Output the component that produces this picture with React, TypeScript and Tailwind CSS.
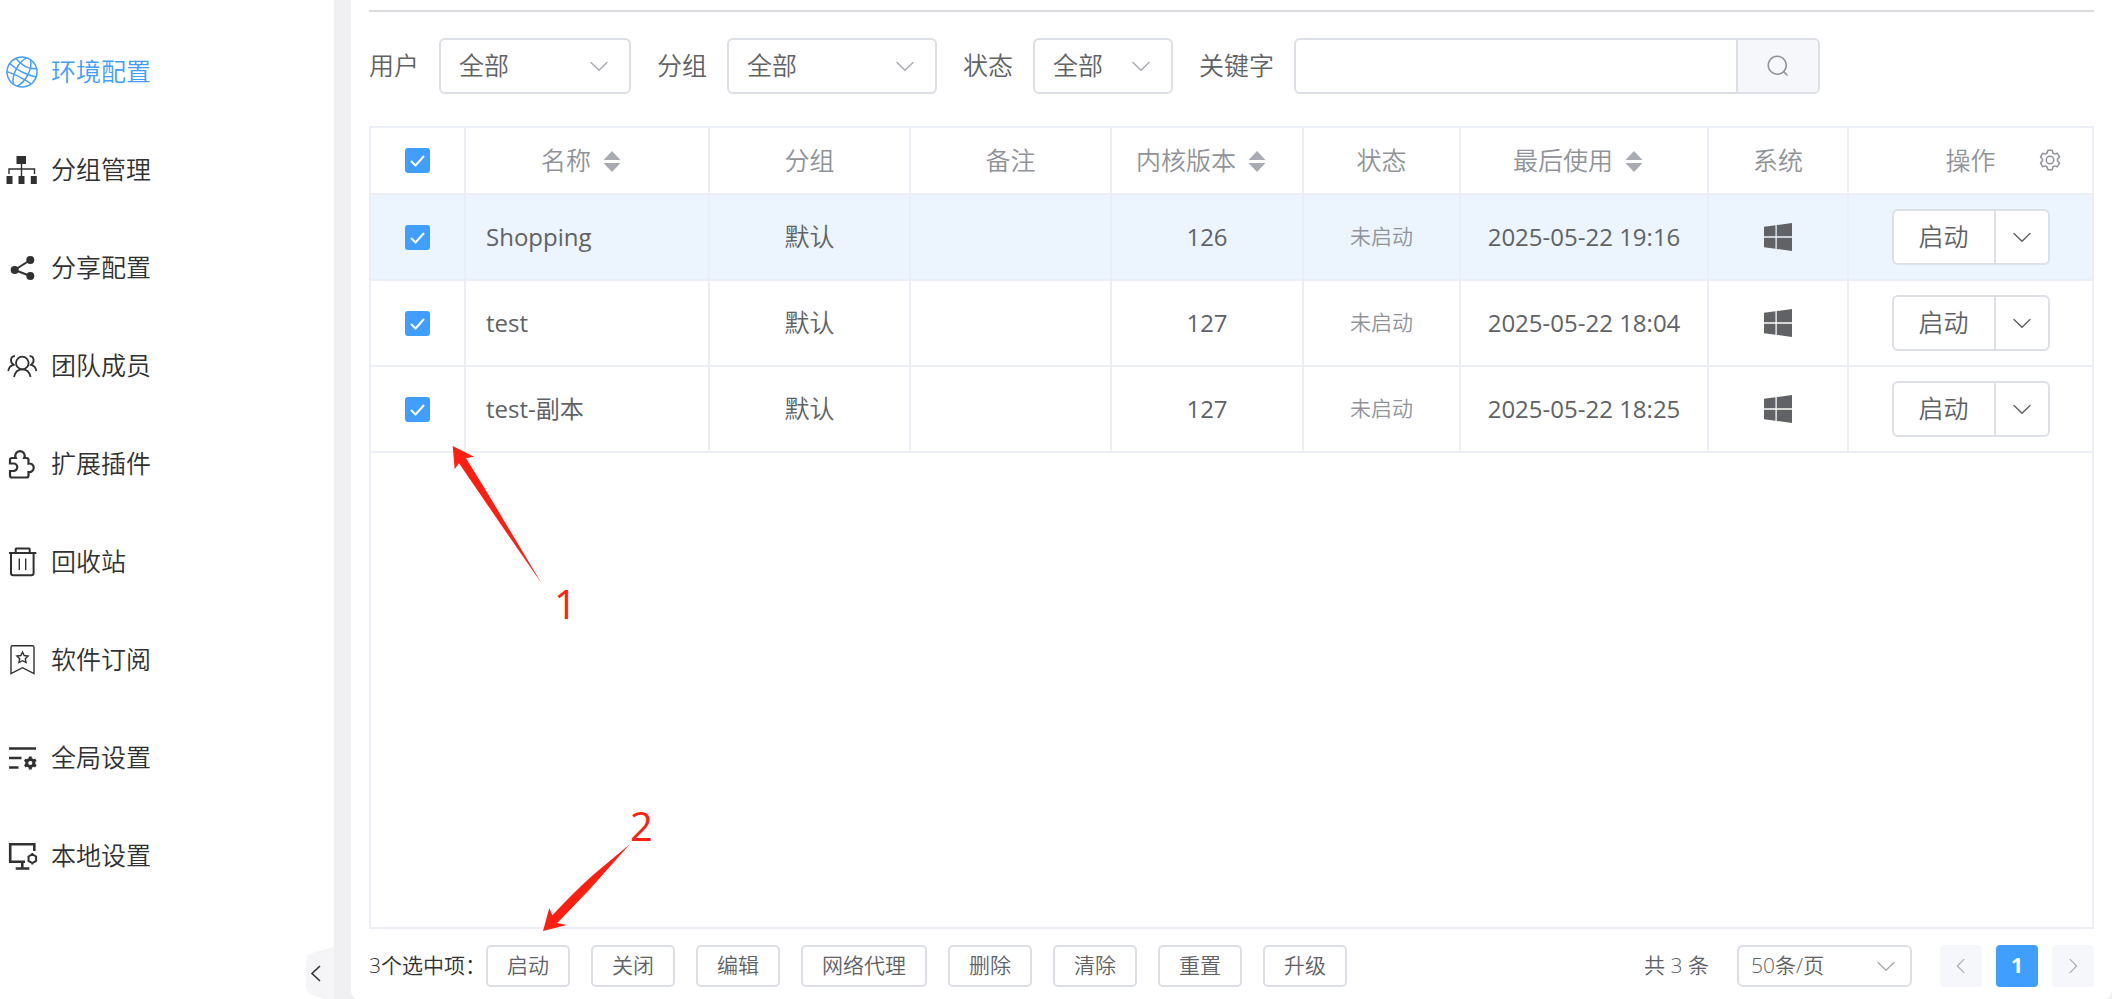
import { useState, type ReactNode } from "react";
import { FaWindows } from "react-icons/fa";
import clsx from "clsx";

const GEAR_PATH =
    "M600.7 64a32 32 0 0 1 30.46 22.2l35.2 109.4c14.8 7.2 28.9 15.36 42.4 24.5l112.4-24.2a32 32 0 0 1 34.4 15.36L944.3 364.8a32 32 0 0 1-4 37.5l-77.1 85.1a357 357 0 0 1 0 49l77.1 85.3a32 32 0 0 1 4 37.5l-88.7 153.6a32 32 0 0 1-34.4 15.3L708.8 803.9c-13.4 9.1-27.6 17.3-42.4 24.5l-35.2 109.4A32 32 0 0 1 600.7 960H423.3a32 32 0 0 1-30.5-22.2L357.7 828.5a352 352 0 0 1-42.6-24.7l-112.3 24.3a32 32 0 0 1-34.4-15.4L79.7 659.2a32 32 0 0 1 4-37.5l77.1-85.2a357 357 0 0 1 0-48.9l-77.1-85.3A32 32 0 0 1 79.7 364.8l88.7-153.6a32 32 0 0 1 34.4-15.3l112.3 24.3c13.6-9.2 27.8-17.4 42.6-24.6l35.2-109.3A32 32 0 0 1 423.2 64zm-23.4 64H446.7l-36.3 113.1-24.5 12a294 294 0 0 0-34.8 20.1l-22.7 15.3-116.2-25.1-65.3 113.2 79.7 88.2-1.9 27.1a293 293 0 0 0 0 40.2l1.9 27.1-79.8 88.2 65.3 113.2 116.2-25 22.7 15.3a294 294 0 0 0 34.8 20.1l24.5 12L446.7 896h130.7l36.5-113.2 24.4-11.9a288 288 0 0 0 34.8-20.1l22.6-15.3 116.3 25 65.3-113.2-79.7-88.2 1.9-27.1a293 293 0 0 0 0-40.3l-1.9-27.1 79.8-88.1-65.3-113.2-116.3 25-22.6-15.2a288 288 0 0 0-34.8-20.1l-24.4-11.9L577.3 128zM512 320a192 192 0 1 1 0 384 192 192 0 0 1 0-384m0 64a128 128 0 1 0 0 256 128 128 0 0 0 0-256";

interface NavItem {
    label: string;
    icon: ReactNode;
}

const navItems: NavItem[] = [
    {
        label: "环境配置",
        icon: (
            <g strokeWidth={1.5} transform="rotate(27 16 16)">
                <circle cx={16} cy={16} r={15} />
                <path d="M14 1.200C8 8 8 24 14 30.800M18 1.200c6 6.800 6 22.800 0 29.600M4.500 6.500q11.500 6 23 0M1.200 14q14.800 4 29.600 0M2.500 22.500q13.500-2 27 0" />
            </g>
        ),
    },
    {
        label: "分组管理",
        icon: (
            <>
                <path d="M3 20v-5h25.500v5M15.500 10v12" strokeWidth={1.4} />
                <path d="M10.500 2h9.500v8h-9.500zM.5 22h6v8h-6zM12.500 22h6v8h-6zM24.800 22h6v8h-6z" fill="currentColor" stroke="none" />
            </>
        ),
    },
    {
        label: "分享配置",
        icon: (
            <>
                <path d="M24.300 8 8.700 18l15.600 6" strokeWidth={2} />
                <g fill="currentColor" stroke="none">
                    <circle cx={24.3} cy={8} r={4} />
                    <circle cx={8.7} cy={18} r={4} />
                    <circle cx={24.3} cy={24} r={4} />
                </g>
            </>
        ),
    },
    {
        label: "团队成员",
        icon: (
            <g strokeWidth={1.8}>
                <circle cx={16.3} cy={13} r={6.3} />
                <path d="M8 27c1-5 4-7.700 8.300-7.700s7.300 2.700 8.300 7.700M9 6.200C4.500 6 3.500 12 7.500 14.800 4.500 15.500 2.800 17.500 2.200 21M23.600 6.200c4.500-.200 5.500 5.800 1.500 8.600 3 .700 4.700 2.700 5.300 6.200" />
            </g>
        ),
    },
    {
        label: "扩展插件",
        icon: (
            <path
                d="M4 15.500V12q0-2 2-2h3.800a4.700 4.700 0 1 1 8.400 0H20.500q2 0 2 2v3.600a4.300 4.300 0 1 1 0 8.400v3.500q0 2-2 2H6q-2 0-2-2v-4.500h3.500a3.700 3.700 0 0 0 0-7.500z"
                strokeWidth={2.2}
            />
        ),
    },
    {
        label: "回收站",
        icon: (
            <>
                <path d="M3 7h27.300M9.700 6.500V3q0-.500.500-.500h13q.500 0 .500.500v3.500M5 7v20q0 2.300 2.300 2.300h18q2.300 0 2.300-2.300V7" strokeWidth={2} />
                <path d="M13.300 12.500V24M19.700 12.500V24" strokeWidth={1.4} />
            </>
        ),
    },
    {
        label: "软件订阅",
        icon: (
            <g strokeWidth={1.4}>
                <path d="M5 29.500V3.500q0-1.700 1.700-1.700H26.300q1.700 0 1.700 1.700v26l-11.500-5.800z" />
                <path d="m16.500 8 1.700 3.500 3.900.500-2.800 2.700.700 3.800-3.500-1.800-3.500 1.800.700-3.800-2.800-2.700 3.900-.500z" />
            </g>
        ),
    },
    {
        label: "全局设置",
        icon: (
            <>
                <path d="M3 6.500h27M3 16h12.500M3 25.500h9.500" strokeWidth={2.4} />
                <circle cx={24.3} cy={21} r={3.6} strokeWidth={3} />
                <path d="M24.300 14.500v2.500M24.300 25v2.500M18.700 17.800l2 1.200M27.900 23l2 1.200M18.700 24.200l2-1.200M27.900 19l2-1.200" strokeWidth={3} />
            </>
        ),
    },
    {
        label: "本地设置",
        icon: (
            <>
                <path d="M28.300 11V4.200H4.200v17.500H19M16.300 22v6M9.700 28.500h13.600" strokeWidth={2.6} />
                <path d="m26.300 14.300 3.800 2.200v4.400l-3.800 2.200-3.800-2.200v-4.400zM26.300 13v1.500M26.300 23v1.500" strokeWidth={2} />
            </>
        ),
    },
];

interface Profile {
    name: string;
    group: string;
    kernel: string;
    lastUsed: string;
}

const profiles: Profile[] = [
    { name: "Shopping", group: "默认", kernel: "126", lastUsed: "2025-05-22 19:16" },
    { name: "test", group: "默认", kernel: "127", lastUsed: "2025-05-22 18:04" },
    { name: "test-副本", group: "默认", kernel: "127", lastUsed: "2025-05-22 18:25" },
];

const batchActions = ["启动", "关闭", "编辑", "网络代理", "删除", "清除", "重置", "升级"];

function Chevron({ className }: { className?: string }) {
    return (
        <svg viewBox="0 0 1024 1024" fill="currentColor" className={className} aria-hidden="true">
            <path d="M831.872 340.864 512 652.672 192.128 340.864a30.592 30.592 0 0 0-42.752 0 29.12 29.12 0 0 0 0 41.6L489.664 714.24a32 32 0 0 0 44.672 0l340.288-331.712a29.12 29.12 0 0 0 0-41.728 30.592 30.592 0 0 0-42.752 0z" />
        </svg>
    );
}

function SortLabel({ children }: { children: ReactNode }) {
    return (
        <div className="flex items-center justify-center gap-3 pr-3">
            {children}
            <svg viewBox="0 0 18 24" className="h-6 w-[18px]" fill="#a8abb2" aria-hidden="true">
                <path d="M9 2l8.500 9H.5zM9 23l8.500-9H.5z" />
            </svg>
        </div>
    );
}

function FilterSelect({ id, label, className }: { id: string; label: string; className: string }) {
    return (
        <div className="flex items-center gap-5">
            <label htmlFor={id}>{label}</label>
            <div className={clsx("relative", className)}>
                <select
                    id={id}
                    className="w-full h-14 appearance-none rounded-md border-2 border-[#dcdfe6] bg-white pl-[18px] text-[#606266]"
                >
                    <option>全部</option>
                </select>
                <Chevron className="absolute right-5 top-4 size-6 text-[#a8abb2] pointer-events-none" />
            </div>
        </div>
    );
}

function Checkbox({ label, checked, onChange }: { label: string; checked: boolean; onChange: () => void }) {
    return (
        <span className="relative mx-auto block size-[25px]">
            <input
                type="checkbox"
                aria-label={label}
                checked={checked}
                onChange={onChange}
                className="block size-full appearance-none rounded-[3px] border-2 border-[#dcdfe6] bg-white checked:border-[#409eff] checked:bg-[#409eff]"
            />
            <svg viewBox="0 0 25 25" className="absolute inset-0 pointer-events-none" fill="none" stroke="#fff" strokeWidth={2}>
                <path d="M6 13l4.500 4.500L19 8" />
            </svg>
        </span>
    );
}

export default function App() {
    const [selected, setSelected] = useState([true, true, true]);
    const allSelected = selected.every(Boolean);

    const toggle = (index: number) => setSelected(selected.map((on, i) => (i === index ? !on : on)));

    return (
        <div className="relative flex min-h-screen bg-[#f0f0f3] text-[25px] font-[350] text-[#606266] font-['Open_Sans','Noto_Sans_CJK_SC',sans-serif]">
            <aside className="relative w-[334px] shrink-0 bg-white pt-[23px]">
                <nav>
                    {navItems.map((item, index) => (
                        <a
                            key={item.label}
                            href="#"
                            className={clsx(
                                "flex h-[98px] items-center gap-[13px] pl-1.5",
                                index === 0 ? "text-[#409eff]" : "text-[#303133]"
                            )}
                        >
                            <svg viewBox="0 0 32 32" className="size-8" fill="none" stroke="currentColor" aria-hidden="true">
                                {item.icon}
                            </svg>
                            {item.label}
                        </a>
                    ))}
                </nav>
                <button type="button" aria-label="收起" className="absolute bottom-0 right-0 h-[52px] w-7">
                    <svg viewBox="0 0 28 52" className="size-full" fill="none">
                        <path d="M28 0 6 6Q0 8 0 14v26q0 6 6 8l12 4h10z" fill="#f5f5f7" />
                        <path d="M14 19 6 26.500 14 34" stroke="#303133" strokeWidth={1.6} />
                    </svg>
                </button>
            </aside>

            <main className="ml-[17px] flex min-w-0 flex-1 flex-col rounded-b-lg bg-white px-[18px] pt-2.5 pb-3">
                <form className="flex items-center gap-[26px] border-t-2 border-[#d9dbde] pt-[26px] pb-8" onSubmit={(e) => e.preventDefault()}>
                    <FilterSelect id="user" label="用户" className="w-[192px]" />
                    <FilterSelect id="group" label="分组" className="w-[210px]" />
                    <FilterSelect id="state" label="状态" className="w-[140px]" />
                    <div className="flex items-center gap-5">
                        <label htmlFor="keyword">关键字</label>
                        <div className="flex h-14 w-[526px] overflow-hidden rounded-md border-2 border-[#dcdfe6]">
                            <input id="keyword" type="text" className="min-w-0 flex-1 px-4 outline-none" />
                            <button
                                type="submit"
                                aria-label="搜索"
                                className="flex w-[82px] items-center justify-center border-l-2 border-[#dcdfe6] bg-[#f5f7fa] text-[#909399]"
                            >
                                <svg viewBox="0 0 1024 1024" className="size-6" fill="currentColor">
                                    <path d="m795.904 750.72 124.992 124.928a32 32 0 0 1-45.248 45.248L750.656 795.904a416 416 0 1 1 45.248-45.248zM480 832a352 352 0 1 0 0-704 352 352 0 0 0 0 704z" />
                                </svg>
                            </button>
                        </div>
                    </div>
                </form>

                <div className="flex-1 border-2 border-[#ebeef5]">
                    <table className="w-full table-fixed border-separate border-spacing-0 text-center [&_td]:border-b-2 [&_td]:border-r-2 [&_td]:border-[#ebeef5] [&_th]:border-b-2 [&_th]:border-r-2 [&_th]:border-[#ebeef5] [&_th]:font-[350] [&_tr>:last-child]:border-r-0">
                        <colgroup>
                            <col className="w-[95px]" />
                            <col className="w-[244px]" />
                            <col className="w-[201px]" />
                            <col className="w-[201px]" />
                            <col className="w-[192px]" />
                            <col className="w-[157px]" />
                            <col className="w-[248px]" />
                            <col className="w-[140px]" />
                            <col className="w-[243px]" />
                        </colgroup>
                        <thead className="text-[#909399]">
                            <tr className="h-[67px]">
                                <th>
                                    <Checkbox
                                        label="全选"
                                        checked={allSelected}
                                        onChange={() => setSelected(selected.map(() => !allSelected))}
                                    />
                                </th>
                                <th>
                                    <SortLabel>名称</SortLabel>
                                </th>
                                <th>分组</th>
                                <th>备注</th>
                                <th>
                                    <SortLabel>内核版本</SortLabel>
                                </th>
                                <th>状态</th>
                                <th>
                                    <SortLabel>最后使用</SortLabel>
                                </th>
                                <th>系统</th>
                                <th>
                                    <div className="relative">
                                        操作
                                        <button type="button" aria-label="列设置" className="absolute right-[30px] top-1.5 size-6">
                                            <svg viewBox="0 0 1024 1024" fill="currentColor">
                                                <path d={GEAR_PATH} />
                                            </svg>
                                        </button>
                                    </div>
                                </th>
                            </tr>
                        </thead>
                        <tbody>
                            {profiles.map((profile, index) => (
                                <tr key={profile.name} className={clsx("h-[86px]", index === 0 && "bg-[#ecf4fe]")}>
                                    <td>
                                        <Checkbox label={profile.name} checked={selected[index]} onChange={() => toggle(index)} />
                                    </td>
                                    <td className="pl-5 text-left text-2xl font-normal">{profile.name}</td>
                                    <td>{profile.group}</td>
                                    <td />
                                    <td className="text-2xl font-normal">{profile.kernel}</td>
                                    <td className="text-[21px] text-[#909399]">未启动</td>
                                    <td className="text-2xl font-normal">{profile.lastUsed}</td>
                                    <td>
                                        <FaWindows className="mx-auto size-8" aria-label="Windows" />
                                    </td>
                                    <td>
                                        <div className="mx-auto flex h-14 w-[158px] overflow-hidden rounded-md border-2 border-[#dcdfe6] bg-white">
                                            <button type="button" className="flex-1">
                                                启动
                                            </button>
                                            <button
                                                type="button"
                                                aria-label="更多"
                                                className="flex w-[54px] items-center justify-center border-l-2 border-[#dcdfe6]"
                                            >
                                                <Chevron className="size-6" />
                                            </button>
                                        </div>
                                    </td>
                                </tr>
                            ))}
                        </tbody>
                    </table>
                </div>

                <footer className="mt-4 flex h-[42px] items-center justify-between text-[21px]">
                    <div className="flex items-center">
                        <span className="text-[#303133]">{selected.filter(Boolean).length}个选中项：</span>
                        <div className="flex gap-[21px]">
                            {batchActions.map((action) => (
                                <button key={action} type="button" className="h-[42px] rounded-[5px] border-2 border-[#dcdfe6] px-[19px]">
                                    {action}
                                </button>
                            ))}
                        </div>
                    </div>
                    <div className="flex items-center gap-3.5">
                        <span className="mr-3.5">共 3 条</span>
                        <div className="relative mr-3.5 w-[175px]">
                            <select
                                aria-label="每页条数"
                                className="h-[42px] w-full appearance-none rounded-md border-2 border-[#dcdfe6] bg-white pl-3"
                            >
                                <option>50条/页</option>
                            </select>
                            <Chevron className="absolute right-3.5 top-[9px] size-6 text-[#a8abb2] pointer-events-none" />
                        </div>
                        <button type="button" aria-label="上一页" className="flex size-[42px] items-center justify-center rounded-sm bg-[#f5f7fa] text-[#a8abb2]">
                            <Chevron className="size-5 rotate-90" />
                        </button>
                        <button type="button" className="size-[42px] rounded-sm bg-[#409eff] font-bold text-white">
                            1
                        </button>
                        <button type="button" aria-label="下一页" className="flex size-[42px] items-center justify-center rounded-sm bg-[#f5f7fa] text-[#a8abb2]">
                            <Chevron className="size-5 -rotate-90" />
                        </button>
                    </div>
                </footer>
            </main>

            {/* numbered step markers drawn over the page */}
            <div className="pointer-events-none absolute left-[452px] top-[446px] text-[40px] leading-10 font-normal text-[#ff1f12]">
                <svg viewBox="0 0 90 138" className="h-[138px] w-[90px]" fill="currentColor">
                    <path d="M.7 0 22 10.700 14 12.300Q32 41 54 78L90 138 41 67 7 17.300 2.700 23.300z" />
                </svg>
                <span className="ml-[102px] block">1</span>
            </div>
            <div className="pointer-events-none absolute bottom-[68px] left-[543px] text-[40px] leading-10 font-normal text-[#ff1f12]">
                <span className="ml-[87px] block">2</span>
                <svg viewBox="0 0 87 87" className="-mt-0.5 h-[87px] w-[87px]" fill="currentColor">
                    <path d="M0 87 6.300 64 9.300 71.300Q32 47 50 31L87 0 46 46 14.300 79 23.700 81z" />
                </svg>
            </div>
        </div>
    );
}
